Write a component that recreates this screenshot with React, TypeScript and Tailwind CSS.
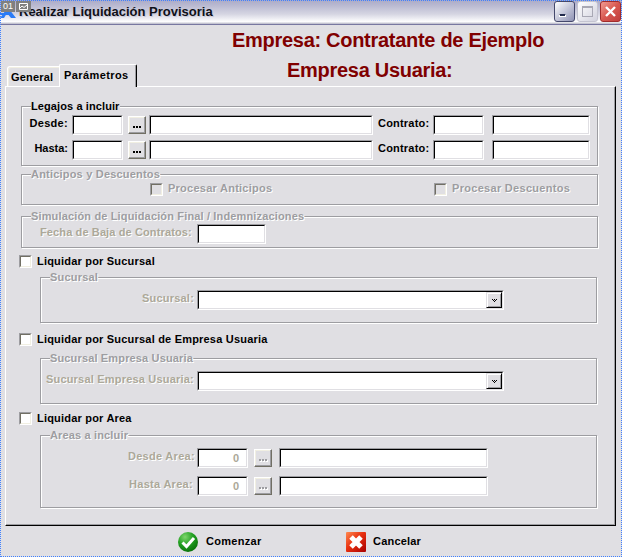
import React from 'react';

const labelBase = 'text-[11px] font-bold whitespace-nowrap';
const disabledShadow = '[text-shadow:1px_1px_0_#fff]';

const Label: React.FC<{ text: string; className?: string; disabled?: boolean }> = ({ text, className = '', disabled }) => (
  <span className={`${labelBase} shrink-0 leading-4 ${disabled ? `text-[#aca899] ${disabledShadow}` : 'text-black'} ${className}`}>{text}</span>
);

const Field: React.FC<{ className?: string; value?: string }> = ({ className = '', value }) => (
  <div className={`h-5 shrink-0 border-t border-l border-t-[#9d9da1] border-l-[#9d9da1] border-b border-r border-b-white border-r-white ${className}`}>
    <div className="flex h-full justify-end border border-t-black border-l-black border-b-[#e0dfe3] border-r-[#e0dfe3] bg-white pr-[7px] text-[11px] leading-[17px] font-bold text-[#aca899]">
      {value}
    </div>
  </div>
);

const Browse: React.FC<{ className?: string; disabled?: boolean }> = ({ className = '', disabled }) => (
  <button
    type="button"
    className={`mt-px flex h-[18px] w-[18px] shrink-0 items-center justify-center gap-px border border-t-white border-l-white border-b-[#716f64] border-r-[#716f64] bg-[#e0dfe3] pt-1 shadow-[inset_-1px_-1px_0_#9d9da1,inset_1px_1px_0_#f1efe2] ${className}`}
  >
    {[0, 1, 2].map(i => (
      <span key={i} className={`h-[2px] w-[2px] ${disabled ? 'bg-[#9d9da1] shadow-[1px_1px_0_#fff]' : 'bg-black'}`} />
    ))}
  </button>
);

const Box: React.FC<{ disabled?: boolean }> = ({ disabled }) => (
  <div className="h-[13px] w-[13px] shrink-0 border border-t-[#9d9da1] border-l-[#9d9da1] border-b-white border-r-white">
    <div className={`h-full border border-t-[#716f64] border-l-[#716f64] border-b-[#f1efe2] border-r-[#f1efe2] ${disabled ? 'bg-[#e0dfe3]' : 'bg-white'}`} />
  </div>
);

const Group: React.FC<{ title: string; titleClass?: string; className?: string; enabled?: boolean; children: React.ReactNode }> = ({
  title,
  titleClass = '',
  className = '',
  enabled,
  children,
}) => (
  <div className={`relative border border-[#9d9da1] shadow-[1px_1px_0_#fff,inset_1px_1px_0_#fff] ${className}`}>
    <span
      className={`absolute -top-[7px] left-[9px] bg-[#e0dfe3] leading-3 ${labelBase} ${enabled ? 'text-black' : `text-[#9d9da1] ${disabledShadow}`} ${titleClass}`}
    >
      {title}
    </span>
    {children}
  </div>
);

const CheckRow: React.FC<{ text: string; className?: string; textClass?: string }> = ({ text, className = '', textClass = '' }) => (
  <div className={`flex h-[13px] gap-[5px] ${className}`}>
    <Box />
    <Label text={text} className={`-mt-0.5 ${textClass}`} />
  </div>
);

const Combo: React.FC = () => (
  <div className="h-5 w-[307px] border border-t-[#9d9da1] border-l-[#9d9da1] border-b-white border-r-white">
    <div className="flex h-full justify-end border border-t-black border-l-black border-b-[#e0dfe3] border-r-[#e0dfe3] bg-white">
      <div className="flex h-4 w-4 items-center justify-center border border-t-[#e0dfe3] border-l-[#e0dfe3] border-b-black border-r-black bg-[#e0dfe3] shadow-[inset_1px_1px_0_#fff,inset_-1px_-1px_0_#9d9da1]">
        <svg width="5" height="3" shapeRendering="crispEdges" fill="#000">
          <path d="M0 0h1v1H0zM2 0h1v1H2zM4 0h1v1H4zM1 1h1v1H1zM3 1h1v1H3zM2 2h1v1H2z" />
        </svg>
      </div>
    </div>
  </div>
);

const LegajoRow: React.FC<{ text: string; textClass: string }> = ({ text, textClass }) => (
  <div className="flex h-5 items-start">
    <div className="flex w-[50px] justify-end pr-1"><Label text={text} className={textClass} /></div>
    <Field className="w-[51px]" />
    <Browse className="ml-[5px]" />
    <Field className="ml-[3px] w-[224px]" />
    <Label text="Contrato:" className="ml-[5px] w-[55px] tracking-[0.2px]" />
    <Field className="w-[51px]" />
    <Field className="ml-2 w-[98px]" />
  </div>
);

const AreaRow: React.FC<{ text: string; pad: string }> = ({ text, pad }) => (
  <div className="flex h-5 items-start">
    <div className={`flex w-[156px] justify-end ${pad}`}><Label text={text} disabled className="tracking-[0.3px]" /></div>
    <Field className="w-[51px]" value="0" />
    <Browse className="ml-[6px]" disabled />
    <Field className="ml-[7px] w-[209px]" />
  </div>
);

const TitleBar: React.FC = () => (
  <div className="relative flex h-[25px] items-start border-b border-[#7777a0] bg-[linear-gradient(to_bottom,#aaaac8_0px,#b8b8d0_5px,#d5d5e2_14px,#ffffff_22px,#c8c8d4_23px,#c0c0ce_24px)]">
    <svg className="mt-[6px] h-[13px] w-[19px] shrink-0" viewBox="0 0 19 13">
      <path d="M5 3h4l7 9h-5L7 7l-3 5H0l4-5zM0 7h12v2H0z" fill="#2a7bf6" />
    </svg>
    <h1 className="mt-[3px] flex-1 text-[13px] leading-[18px] font-bold whitespace-nowrap text-[#0f1018] [text-shadow:1px_1px_0_#c9c9d8]">
      Realizar Liquidación Provisoria
    </h1>
    <div className="mt-px mr-px flex gap-[2px]">
      <div className="h-[21px] w-[21px] rounded-[3px] border border-[#44486c] bg-linear-to-br from-white via-[#c6c8da] to-[#8f92b4] pt-3 pl-1">
        <div className="h-[3px] w-[7px] border border-white border-t-[#222a4c] bg-[#222a4c]" />
      </div>
      <div className="flex h-[21px] w-[21px] items-center justify-center rounded-[3px] border border-[#c4c4d0] bg-linear-to-br from-white to-[#d2d2de]">
        <div className="h-[11px] w-[11px] border border-t-2 border-[#a8a8b4]" />
      </div>
      <div className="flex h-[21px] w-[21px] items-center justify-center rounded-[3px] border border-[#a02c2c] bg-linear-to-br from-[#f09a92] via-[#d85850] to-[#c03c3c]">
        <svg width="13" height="13" viewBox="0 0 13 13">
          <path d="M2 2l9 9M11 2l-9 9" stroke="#fff" strokeWidth="2.4" />
        </svg>
      </div>
    </div>
    <div className="absolute top-px left-px flex gap-px">
      <div className="h-[11px] w-[14px] bg-[#808080] text-center text-[9px] leading-[11px] text-white">01</div>
      <div className="flex h-[11px] w-[15px] items-center justify-center bg-[#808080]">
        <svg width="9" height="7" viewBox="0 0 9 7" fill="none" stroke="#fff">
          <path d="M.5.5h8v6h-8zM1 5l2-2 2 1.500 3-2.500" />
        </svg>
      </div>
    </div>
  </div>
);

export default function App() {
  return (
    <div className="relative h-[557px] w-[622px] overflow-hidden bg-[#e0dfe3] font-['Liberation_Sans',Arial,sans-serif]">
      <TitleBar />

      <div className="relative z-10 flex h-[61px] items-end pl-[7px]">
        <div className="flex h-5 w-[52px] rounded-tl-[3px] border-t border-l border-white pt-[2px] pl-[3px] shadow-[inset_1px_1px_0_#f1efe2]">
          <Label text="General" className="tracking-[0.2px]" />
        </div>
        <div className="-mb-px flex h-[23px] w-[78px] rounded-t-[2px] border-t border-l border-r border-t-white border-l-white border-r-black bg-[#e0dfe3] pt-[2px] pl-1 shadow-[inset_-1px_0_0_#9d9da1]">
          <Label text="Parámetros" className="tracking-[0.4px]" />
        </div>
        <div className="ml-[95px] self-start pt-[2px] text-[20px] leading-[26px] font-bold tracking-[-0.29px] whitespace-nowrap text-[#800000]">
          <div>Empresa: Contratante de Ejemplo</div>
          <div className="mt-1 pl-[55px]">Empresa Usuaria:</div>
        </div>
      </div>

      <div className="ml-[5px] h-[440px] w-[611px] border border-t-white border-l-white border-b-black border-r-black pt-[19px] pl-[13px] shadow-[inset_-1px_-1px_0_#9d9da1]">
        <Group title="Legajos a incluir" titleClass="tracking-[0.1px]" enabled className="ml-0.5 flex h-[60px] w-[577px] flex-col gap-[5px] pt-2">
          <LegajoRow text="Desde:" textClass="tracking-[0.3px]" />
          <LegajoRow text="Hasta:" textClass="" />
        </Group>

        <Group title="Anticipos y Descuentos" titleClass="tracking-[0.2px]" className="mt-2 ml-0.5 flex h-[31px] w-[577px] pt-2 pl-32">
          <div className="flex w-[284px] gap-[5px]">
            <Box disabled />
            <Label text="Procesar Anticipos" className={`-mt-[3px] tracking-[0.25px] text-[#9d9da1]! ${disabledShadow}`} />
          </div>
          <div className="flex gap-[5px]">
            <Box disabled />
            <Label text="Procesar Descuentos" className={`-mt-[3px] tracking-[0.3px] text-[#9d9da1]! ${disabledShadow}`} />
          </div>
        </Group>

        <Group title="Simulación de Liquidación Final / Indemnizaciones" titleClass="tracking-[0.15px]" className="mt-[11px] ml-0.5 flex h-8 w-[577px] pt-[7px] pl-[18px]">
          <Label text="Fecha de Baja de Contratos:" disabled className="w-[157px] tracking-[0.12px]" />
          <Field className="w-[69px]" />
        </Group>

        <CheckRow text="Liquidar por Sucursal" textClass="tracking-[0.2px]" className="mt-[7px]" />
        <Group title="Sucursal" titleClass="tracking-[0.2px]" className="mt-[9px] ml-[21px] flex h-[46px] w-[557px] pt-3">
          <Label text="Sucursal:" disabled className="w-[156px] pr-[3px] text-right tracking-[0.2px]" />
          <Combo />
        </Group>

        <CheckRow text="Liquidar por Sucursal de Empresa Usuaria" textClass="tracking-[0.2px]" className="mt-[10px]" />
        <Group title="Sucursal Empresa Usuaria" titleClass="tracking-[0.15px]" className="mt-3 ml-[21px] flex h-[46px] w-[557px] pt-3">
          <Label text="Sucursal Empresa Usuaria:" disabled className="w-[156px] pr-[3px] text-right tracking-[0.2px]" />
          <Combo />
        </Group>

        <CheckRow text="Liquidar por Area" textClass="tracking-[0.2px]" className="mt-2" />
        <Group title="Areas a incluir" titleClass="tracking-[0.15px]" className="mt-[10px] ml-[21px] flex h-[73px] w-[557px] flex-col gap-2 pt-3">
          <AreaRow text="Desde Area:" pad="pr-[2px]" />
          <AreaRow text="Hasta Area:" pad="pr-[4px]" />
        </Group>
      </div>

      <div className="flex items-start pt-[6px] pl-[178px]">
        <button type="button" className="flex w-[168px] gap-2">
          <svg width="20" height="20" viewBox="0 0 20 20">
            <defs>
              <radialGradient id="ok" cx="0.35" cy="0.25" r="0.8">
                <stop offset="0" stopColor="#7fd66c" />
                <stop offset="0.5" stopColor="#22a022" />
                <stop offset="1" stopColor="#087008" />
              </radialGradient>
            </defs>
            <circle cx="10" cy="10" r="10" fill="url(#ok)" />
            <path d="M4.500 10.500l4 4 7.500-8.500" fill="none" stroke="#fff" strokeWidth="3" />
          </svg>
          <Label text="Comenzar" className="mt-px tracking-[0.3px]" />
        </button>
        <button type="button" className="flex gap-[7px]">
          <svg width="20" height="20" viewBox="0 0 20 20">
            <defs>
              <linearGradient id="no" x1="0" y1="0" x2="1" y2="1">
                <stop offset="0" stopColor="#ff8a50" />
                <stop offset="0.45" stopColor="#e83010" />
                <stop offset="1" stopColor="#a80000" />
              </linearGradient>
            </defs>
            <rect width="20" height="20" rx="1" fill="url(#no)" />
            <path d="M5 5l10 10M15 5L5 15" stroke="#fff" strokeWidth="5" />
          </svg>
          <Label text="Cancelar" className="mt-px tracking-[0.2px]" />
        </button>
      </div>

      <div className="pointer-events-none absolute inset-0 z-20 border border-dotted border-[#3f80ff]" />
    </div>
  );
}
